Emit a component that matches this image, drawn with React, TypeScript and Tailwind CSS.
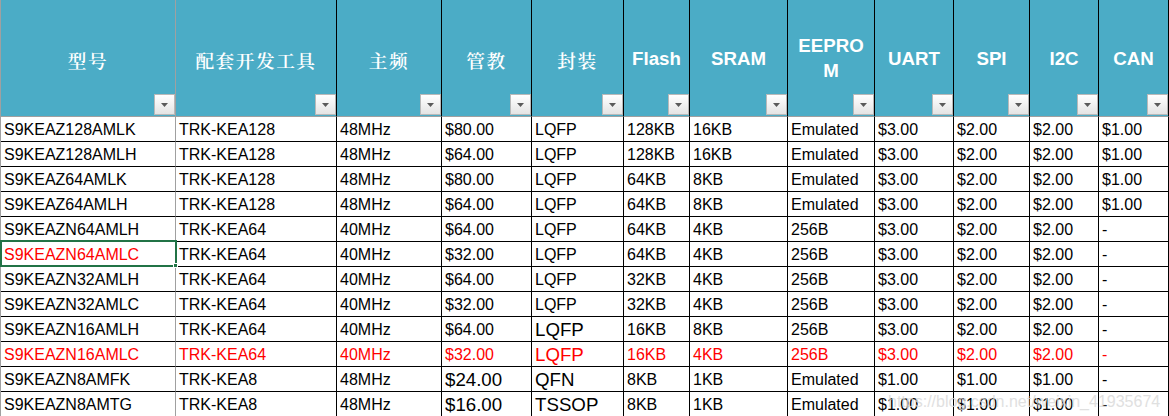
import React from "react";

const widths = [
  "w-[175px]",
  "w-[161px]",
  "w-[105px]",
  "w-[90px]",
  "w-[92px]",
  "w-[66px]",
  "w-[98px]",
  "w-[87px]",
  "w-[79px]",
  "w-[76px]",
  "w-[69px]",
  "w-[70px]",
];

type Cell = { t: string; big?: boolean; red?: boolean };

const headers: { label: React.ReactNode; cjk: boolean }[] = [
  { label: "型号", cjk: true },
  { label: "配套开发工具", cjk: true },
  { label: "主频", cjk: true },
  { label: "管教", cjk: true },
  { label: "封装", cjk: true },
  { label: "Flash", cjk: false },
  { label: "SRAM", cjk: false },
  {
    label: (
      <>
        EEPRO
        <br />M
      </>
    ),
    cjk: false,
  },
  { label: "UART", cjk: false },
  { label: "SPI", cjk: false },
  { label: "I2C", cjk: false },
  { label: "CAN", cjk: false },
];

const raw: string[][] = [
  ["S9KEAZ128AMLK", "TRK-KEA128", "48MHz", "$80.00", "LQFP", "128KB", "16KB", "Emulated", "$3.00", "$2.00", "$2.00", "$1.00"],
  ["S9KEAZ128AMLH", "TRK-KEA128", "48MHz", "$64.00", "LQFP", "128KB", "16KB", "Emulated", "$3.00", "$2.00", "$2.00", "$1.00"],
  ["S9KEAZ64AMLK", "TRK-KEA128", "48MHz", "$80.00", "LQFP", "64KB", "8KB", "Emulated", "$3.00", "$2.00", "$2.00", "$1.00"],
  ["S9KEAZ64AMLH", "TRK-KEA128", "48MHz", "$64.00", "LQFP", "64KB", "8KB", "Emulated", "$3.00", "$2.00", "$2.00", "$1.00"],
  ["S9KEAZN64AMLH", "TRK-KEA64", "40MHz", "$64.00", "LQFP", "64KB", "4KB", "256B", "$3.00", "$2.00", "$2.00", "-"],
  ["S9KEAZN64AMLC", "TRK-KEA64", "40MHz", "$32.00", "LQFP", "64KB", "4KB", "256B", "$3.00", "$2.00", "$2.00", "-"],
  ["S9KEAZN32AMLH", "TRK-KEA64", "40MHz", "$64.00", "LQFP", "32KB", "4KB", "256B", "$3.00", "$2.00", "$2.00", "-"],
  ["S9KEAZN32AMLC", "TRK-KEA64", "40MHz", "$32.00", "LQFP", "32KB", "4KB", "256B", "$3.00", "$2.00", "$2.00", "-"],
  ["S9KEAZN16AMLH", "TRK-KEA64", "40MHz", "$64.00", "LQFP", "16KB", "8KB", "256B", "$3.00", "$2.00", "$2.00", "-"],
  ["S9KEAZN16AMLC", "TRK-KEA64", "40MHz", "$32.00", "LQFP", "16KB", "4KB", "256B", "$3.00", "$2.00", "$2.00", "-"],
  ["S9KEAZN8AMFK", "TRK-KEA8", "48MHz", "$24.00", "QFN", "8KB", "1KB", "Emulated", "$1.00", "$1.00", "$1.00", "-"],
  ["S9KEAZN8AMTG", "TRK-KEA8", "48MHz", "$16.00", "TSSOP", "8KB", "1KB", "Emulated", "$1.00", "$1.00", "$1.00", "-"],
];

const rows: Cell[][] = raw.map((r, ri) =>
  r.map((t, ci) => {
    const c: Cell = { t };
    if (ri === 5 && ci === 0) c.red = true;
    if (ri === 9) c.red = true;
    if ((ri === 8 || ri === 9) && ci === 4) c.big = true;
    if ((ri === 10 || ri === 11) && (ci === 3 || ci === 4)) c.big = true;
    return c;
  })
);

function DropButton() {
  return (
    <div className="absolute right-0 bottom-[1px] flex h-[21px] w-[21px] items-center justify-center border border-[#b9b9b9] bg-gradient-to-b from-white to-[#e4e4e4]">
      <svg width="7" height="4" viewBox="0 0 7 4" className="mt-[1px]">
        <path d="M0 0 H7 L3.5 4 Z" fill="#5a5a5a" />
      </svg>
    </div>
  );
}

export default function App() {
  return (
    <div
      className="relative h-[416px] w-[1169px] overflow-hidden bg-white text-black"
      style={{ fontFamily: '"Liberation Sans", Arial, sans-serif' }}
    >
      <div className="flex border-l border-l-[#a0a0a0]">
        {headers.map((h, i) => (
          <div
            key={i}
            className={`relative flex h-[117px] shrink-0 items-center justify-center border-r border-b border-b-[#a0a0a0] bg-[#4bacc6] text-center text-white ${widths[i]} ${
              i === 0 ? "border-r-[#a0a0a0]" : "border-r-black"
            }`}
          >
            {h.cjk ? (
              <span
                className="pt-[4px] text-[18.7px] font-semibold tracking-[1.5px]"
                style={{ fontFamily: '"Noto Serif CJK SC", "Noto Sans CJK SC", serif' }}
              >
                {h.label}
              </span>
            ) : (
              <span className="text-[18.7px] leading-[25px] font-bold">{h.label}</span>
            )}
            <DropButton />
          </div>
        ))}
      </div>
      {rows.map((r, ri) => (
        <div key={ri} className="flex border-l border-l-[#a0a0a0]">
          {r.map((c, ci) => (
            <div
              key={ci}
              className={`relative h-[25px] shrink-0 overflow-visible border-r border-b border-b-black pt-[1px] pl-[3px] leading-[24px] whitespace-nowrap ${widths[ci]} ${
                ci === 0 ? "border-r-[#a0a0a0]" : "border-r-black"
              } ${c.big ? "text-[18.7px]" : "text-[16px]"} ${c.red ? "text-[#ff0000]" : "text-black"}`}
            >
              {c.t}
              {ri === 5 && ci === 0 && (
                <div className="absolute -top-[2px] -right-[2px] -bottom-[1px] -left-[1px] z-10 border-2 border-[#217346]">
                  <div className="absolute -right-[3px] -bottom-[3px] h-[5px] w-[5px] border border-white bg-[#217346]" />
                </div>
              )}
            </div>
          ))}
        </div>
      ))}
      <div className="pointer-events-none absolute top-[390px] left-[888px] text-[16px] whitespace-nowrap text-[#d9d9d9] opacity-80">
        https://blog.csdn.net/weixin_41935674
      </div>
    </div>
  );
}
